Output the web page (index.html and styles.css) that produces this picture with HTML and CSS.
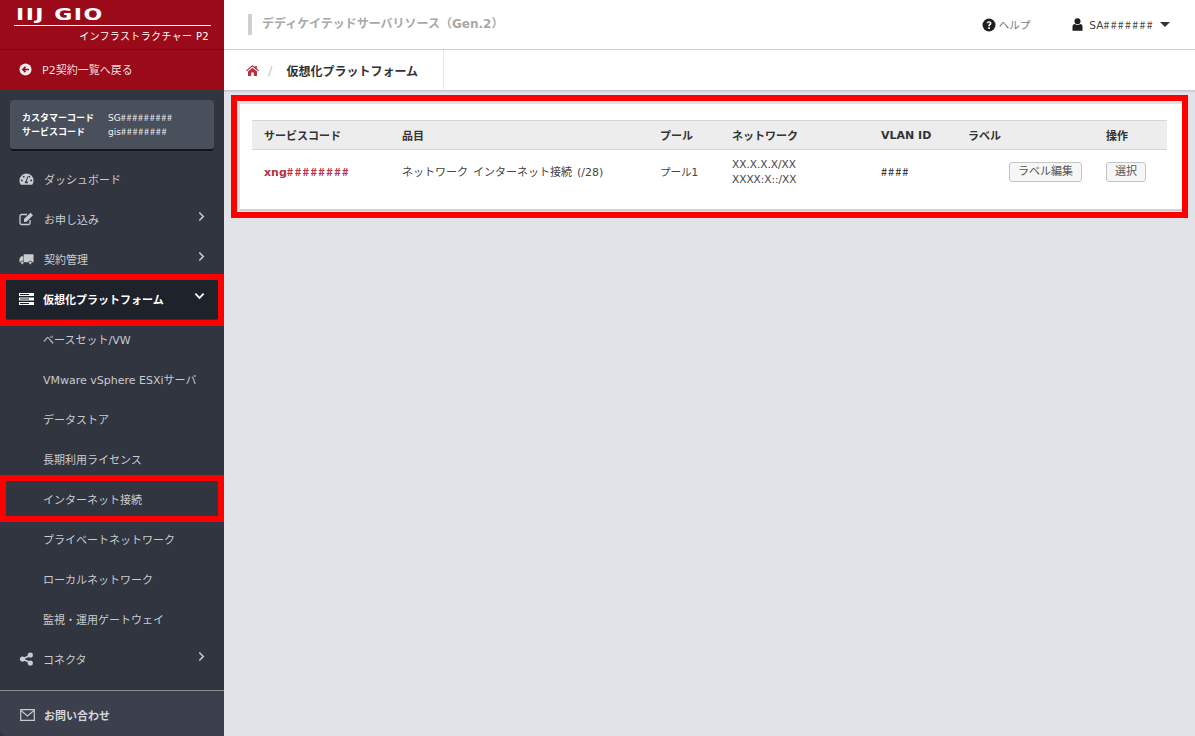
FILE: index.html
```html
<!DOCTYPE html>
<html lang="ja">
<head>
<meta charset="utf-8">
<title>仮想化プラットフォーム</title>
<link rel="stylesheet" href="styles.css">
</head>
<body>
<div class="app">
  <aside class="sidebar">
    <div class="brand">
      <div class="logo"><span class="logo-text">IIJ GIO</span></div>
      <div class="product">インフラストラクチャー P2</div>
    </div>
    <a class="back"><svg class="back-ico" viewBox="0 0 14 14"><circle cx="7" cy="7" r="6.5" fill="currentColor"/><path d="M3 7l3.4-3.4 1.2 1.2-1.3 1.3h4.4v1.8H6.300l1.300 1.300-1.200 1.200z" fill="#9b0a18"/></svg>P2契約一覧へ戻る</a>
    <div class="codes">
      <div class="code-row"><b>カスタマーコード</b><span>SG<i class="h">#########</i></span></div>
      <div class="code-row"><b>サービスコード</b><span>gis<i class="h">########</i></span></div>
    </div>
    <nav class="nav">
      <a class="item"><svg class="ico" viewBox="0 0 16 14"><path fill-rule="evenodd" d="M8 1a7.500 7.500 0 0 0-7.500 7.500c0 1.700.5 3.200 1.500 4.500h12c1-1.300 1.500-2.800 1.500-4.500A7.500 7.500 0 0 0 8 1zM3 9.500a1 1 0 1 1 0-2 1 1 0 0 1 0 2zm2-4a1 1 0 1 1 0-2 1 1 0 0 1 0 2zm4.400 6H6.600a1.500 1.500 0 0 1 .8-2.300l1.300-5 1 .3-1.300 5a1.500 1.500 0 0 1 1 2zM11 5.500a1 1 0 1 1 0-2 1 1 0 0 1 0 2zm2 4a1 1 0 1 1 0-2 1 1 0 0 1 0 2z" fill="currentColor"/></svg>ダッシュボード</a>
      <a class="item"><svg class="ico" viewBox="0 0 15 14"><path d="M11 8v3a1.500 1.500 0 0 1-1.500 1.500h-7A1.500 1.500 0 0 1 1 11V4a1.500 1.500 0 0 1 1.500-1.500H8" fill="none" stroke="currentColor" stroke-width="1.300"/><path d="M5 7l6.500-6.300 2.500 2.500L7.500 9.700 5 10z" fill="currentColor"/></svg>お申し込み<svg class="chev" viewBox="0 0 8 12"><path d="M1.500 1.500 6 6l-4.500 4.500" fill="none" stroke="currentColor" stroke-width="1.800"/></svg></a>
      <a class="item"><svg class="ico" viewBox="0 0 16 12"><path d="M5 1h10.500v8.500H5zM4.500 3H2.500L.5 5.500v4h4z" fill="currentColor"/><circle cx="3.500" cy="10" r="1.800" fill="currentColor" stroke="#31353f" stroke-width=".8"/><circle cx="12" cy="10" r="1.800" fill="currentColor" stroke="#31353f" stroke-width=".8"/></svg>契約管理<svg class="chev" viewBox="0 0 8 12"><path d="M1.500 1.500 6 6l-4.500 4.500" fill="none" stroke="currentColor" stroke-width="1.800"/></svg></a>
      <a class="item active"><svg class="ico" viewBox="0 0 15 12"><path d="M0 0h15v3H0zM0 4.500h15v3H0zM0 9h15v3H0z" fill="#fff"/><path d="M1 1.500h9M1 6h9M1 10.500h9" stroke="#1e222b" stroke-width="1"/></svg>仮想化プラットフォーム<svg class="chev-down" viewBox="0 0 12 8"><path d="M1.500 1.500 6 6l4.500-4.500" fill="none" stroke="currentColor" stroke-width="2"/></svg></a>
      <a class="item sub">ベースセット/VW</a>
      <a class="item sub">VMware vSphere ESXiサーバ</a>
      <a class="item sub">データストア</a>
      <a class="item sub">長期利用ライセンス</a>
      <a class="item sub">インターネット接続</a>
      <a class="item sub">プライベートネットワーク</a>
      <a class="item sub">ローカルネットワーク</a>
      <a class="item sub">監視・運用ゲートウェイ</a>
      <a class="item tight"><svg class="ico" viewBox="0 0 14 14"><path d="M10.500 3.500 3 7l7.500 3.500" fill="none" stroke="currentColor" stroke-width="1.600"/><circle cx="10.800" cy="3" r="2.600" fill="currentColor"/><circle cx="3" cy="7" r="2.600" fill="currentColor"/><circle cx="10.800" cy="11" r="2.600" fill="currentColor"/></svg>コネクタ<svg class="chev" viewBox="0 0 8 12"><path d="M1.500 1.500 6 6l-4.500 4.500" fill="none" stroke="currentColor" stroke-width="1.800"/></svg></a>
    </nav>
    <a class="contact"><svg class="ico" viewBox="0 0 15 12"><path d="M.7.700h13.600v10.600H.7z" fill="none" stroke="currentColor" stroke-width="1.200"/><path d="M1 1.500 7.500 7 14 1.500" fill="none" stroke="currentColor" stroke-width="1.200"/></svg>お問い合わせ</a>
  </aside>
  <div class="main">
    <header class="topbar">
      <div class="title">デディケイテッドサーバリソース（Gen.2）</div>
      <a class="help"><svg class="help-ico" viewBox="0 0 14 14"><circle cx="7" cy="7" r="6.500" fill="#1f1f1f"/><path d="M4.700 5.300C4.800 3.900 5.800 3.200 7.100 3.200c1.400 0 2.400.8 2.400 2 0 1.800-1.700 1.600-1.700 3H6.200c0-2.200 1.600-2 1.600-3 0-.4-.3-.7-.8-.7s-.8.300-.9.800zM6.200 9.200h1.700v1.700H6.200z" fill="#fff"/></svg>ヘルプ</a>
      <a class="user"><svg class="user-ico" viewBox="0 0 11 13"><circle cx="5.500" cy="3.300" r="3" fill="#1f1f1f"/><path d="M.5 12.800V8.500c0-1.600 1-2.500 2.300-2.500.7.500 1.700.9 2.700.9s2-.4 2.700-.9c1.300 0 2.300.9 2.300 2.500v4.300z" fill="#1f1f1f"/></svg>SA<i class="h h-user">#######</i><span class="caret"></span></a>
    </header>
    <div class="crumbs">
      <div class="crumb-box">
        <svg class="home" viewBox="0 0 13 11"><path d="M6.500 0 0 5.500l.7.800L6.500 1.500l5.800 4.800.7-.8-2.200-1.900V1H9.200v1.100zM2 6.500V11h3.200V7.500h2.600V11H11V6.500L6.500 2.800z" fill="#b8303f"/></svg>
        <span class="slash">/</span>
        <span class="crumb">仮想化プラットフォーム</span>
      </div>
    </div>
    <section class="content">
      <div class="card">
        <table class="grid">
          <colgroup><col class="c1"><col class="c2"><col class="c3"><col class="c4"><col class="c5"><col class="c6"><col class="c7"></colgroup>
          <thead>
            <tr><th>サービスコード</th><th>品目</th><th>プール</th><th>ネットワーク</th><th>VLAN ID</th><th>ラベル</th><th>操作</th></tr>
          </thead>
          <tbody>
            <tr>
              <td><a class="svc">xng<i class="h h-svc">########</i></a></td>
              <td class="prod">ネットワーク インターネット接続 (/28)</td>
              <td>プール1</td>
              <td class="mono">XX.X.X.X/XX<br>XXXX:X::/XX</td>
              <td><i class="h h-vlan">####</i></td>
              <td class="right"><button class="btn">ラベル編集</button></td>
              <td><button class="btn">選択</button></td>
            </tr>
          </tbody>
        </table>
      </div>
    </section>
  </div>
</div>
<div class="mark mark-nav"></div>
<div class="mark mark-inet"></div>
<div class="mark mark-card"></div>
</body>
</html>
```

FILE: styles.css
```css
* { box-sizing: border-box; }
html, body { margin: 0; height: 100%; }
body {
  font-family: "DejaVu Sans", "Noto Sans CJK JP", sans-serif;
  font-size: 11px;
  color: #333;
  overflow: hidden;
}
.app { display: flex; height: 736px; }
.h { font-family: "Noto Sans CJK JP", sans-serif; font-style: normal; }
.code-row .h { letter-spacing: .8px; }
.h-user { letter-spacing: 1.4px; }
.h-svc { letter-spacing: 1.4px; }
.h-vlan { letter-spacing: 1px; color: #222; font-size: 11px; }

.sidebar {
  width: 224px;
  flex: none;
  display: flex;
  flex-direction: column;
  background: #31353f;
  color: #c8cbd0;
}
.brand {
  height: 50px;
  padding: 8px 13px 0 14px;
  background: #9b0a18;
  border-bottom: 1px solid #7d0612;
  color: #fff;
}
.logo {
  height: 18px;
  padding: 2px 0 0 2px;
  border-bottom: 1px solid #fff;
}
.logo-text {
  display: inline-block;
  font-size: 15px;
  font-weight: 700;
  line-height: 11px;
  letter-spacing: 1px;
  transform: scaleX(1.47);
  transform-origin: left center;
}
.product {
  margin-top: 4px;
  text-align: right;
  font-size: 10px;
  line-height: 13px;
  letter-spacing: .35px;
  padding-right: 2px;
}
.back {
  height: 40px;
  display: flex;
  align-items: center;
  padding: 0 0 2px 19px;
  background: #9b0a18;
  color: #ecdcde;
}
.back-ico { width: 13px; height: 13px; margin-right: 10px; color: #f4eaeb; flex: none; }
.codes {
  margin: 10px 10px 0;
  height: 51px;
  padding: 11px 12px 0;
  background: #4a505b;
  border-radius: 4px;
  border-bottom: 2px solid #14161b;
  color: #fff;
  font-size: 9px;
  line-height: 14px;
}
.code-row { display: flex; }
.code-row b { width: 86px; flex: none; }
.code-row span { color: #eef0f2; }
.nav { flex: 1; padding-top: 8px; }
.item {
  height: 40px;
  display: flex;
  align-items: center;
  padding-left: 19px;
  position: relative;
  color: #c8cbd0;
}
.ico { width: 15px; height: 14px; margin-right: 10px; flex: none; color: #c8cbd0; }
.tight .ico, .active .ico { margin-right: 9px; }
.chev { position: absolute; left: 198px; top: 12px; width: 7px; height: 11px; color: #c8cbd0; }
.chev-down { position: absolute; left: 194px; top: 13px; width: 11px; height: 8px; color: #fff; }
.item.active { background: #1e222b; color: #fff; font-weight: 700; }
.item.sub { padding-left: 43px; }
.contact {
  height: 46px;
  display: flex;
  align-items: center;
  padding: 2px 0 0 20px;
  background: #3b404c;
  border-top: 1px solid #8a8c90;
  border-bottom-left-radius: 6px;
  color: #d4d6da;
  font-weight: 700;
}
.contact .ico { margin-right: 9px; }

.main { flex: 1; min-width: 0; display: flex; flex-direction: column; background: #e2e3e8; }
.topbar {
  height: 50px;
  flex: none;
  display: flex;
  align-items: center;
  background: #fff;
  border-bottom: 1px solid #d2d2d2;
  padding-left: 24px;
}
.title {
  flex: 1;
  border-left: 4px solid #cfcfcf;
  padding-left: 10px;
  height: 21px;
  line-height: 21px;
  font-weight: 700;
  color: #a8a8a8;
  font-size: 12px;
}
.help {
  display: flex;
  align-items: center;
  color: #777;
  font-size: 10.500px;
  margin-right: 40px;
}
.help-ico { width: 14px; height: 14px; margin-right: 3px; }
.user { display: flex; align-items: center; color: #444; font-size: 10.500px; margin-right: 25px; }
.user-ico { width: 11px; height: 13px; margin-right: 6px; }
.caret {
  margin-left: 6px;
  border-top: 5px solid #333;
  border-left: 5px solid transparent;
  border-right: 5px solid transparent;
}
.help { margin-right: 42px; }
.crumbs {
  height: 41px;
  flex: none;
  background: #fff;
  border-bottom: 1px solid #c9c9c9;
  box-shadow: 0 1px 1px rgba(0,0,0,.08);
}
.crumb-box {
  display: inline-flex;
  align-items: center;
  width: 220px;
  height: 40px;
  padding-left: 22px;
  border-right: 1px solid #e8e8e8;
}
.home { width: 13px; height: 11px; }
.slash { color: #c4c4c4; margin: 0 14px 0 9px; font-size: 13px; }
.crumb { font-weight: 700; color: #333; font-size: 12px; }
.content { padding: 13px 8px 0 16px; }
.card {
  height: 107px;
  padding: 16px 13px 0 12px;
  background: #fff;
  border-bottom: 2px solid #cfd0d4;
  border-right: 2px solid #d6d7db;
  border-radius: 1px;
}
.grid { width: 915px; table-layout: fixed; border-collapse: collapse; }
.c1 { width: 138px; } .c2 { width: 258px; } .c3 { width: 72px; } .c4 { width: 149px; }
.c5 { width: 87px; } .c6 { width: 138px; } .c7 { width: 73px; }
.grid th {
  height: 29px;
  padding: 0 0 0 12px;
  text-align: left;
  font-weight: 700;
  color: #333;
  background: #ededed;
  border-top: 1px solid #d6d6d6;
  border-bottom: 1px solid #d6d6d6;
}
.grid td { height: 45px; padding: 0 0 0 12px; color: #444; line-height: 15px; font-size: 10.500px; }
.grid td.right { text-align: right; padding-right: 12px; }
.grid td.prod { font-size: 11px; word-spacing: 1.5px; }
.svc { color: #b8303f; font-weight: 700; font-size: 11px; }
.mono { font-size: 10.500px; }
.btn {
  font: inherit;
  font-size: 11px;
  height: 20px;
  padding: 0 8px;
  line-height: 18px;
  color: #555;
  background: #f6f6f6;
  border: 1px solid #c4c4c4;
  border-radius: 3px;
}

.mark { position: absolute; border: 6px solid #f00; pointer-events: none; }
.mark-nav { left: 0; top: 274px; width: 224px; height: 52px; }
.mark-inet { left: 0; top: 475px; width: 224px; height: 47px; }
.mark-card { left: 231px; top: 95px; width: 957px; height: 123px; }
```
